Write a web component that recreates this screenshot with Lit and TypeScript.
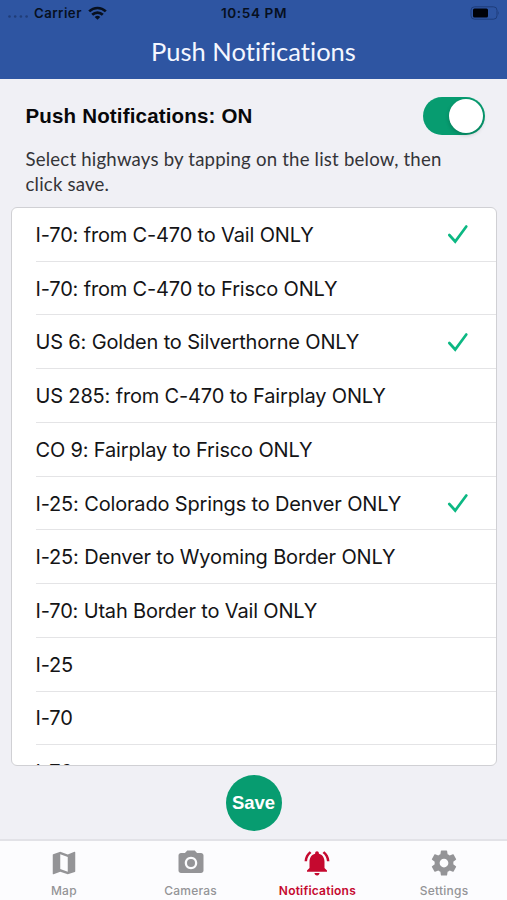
import { LitElement, html, css, svg } from "lit";
import { customElement, state } from "lit/decorators.js";
import { classMap } from "lit/directives/class-map.js";

interface Highway {
  name: string;
  selected?: boolean;
}

const HIGHWAYS: Highway[] = [
  { name: "I-70: from C-470 to Vail ONLY", selected: true },
  { name: "I-70: from C-470 to Frisco ONLY" },
  { name: "US 6: Golden to Silverthorne ONLY", selected: true },
  { name: "US 285: from C-470 to Fairplay ONLY" },
  { name: "CO 9: Fairplay to Frisco ONLY" },
  { name: "I-25: Colorado Springs to Denver ONLY", selected: true },
  { name: "I-25: Denver to Wyoming Border ONLY" },
  { name: "I-70: Utah Border to Vail ONLY" },
  { name: "I-25" },
  { name: "I-70" },
  { name: "I-76" },
];

const TABS = [
  {
    label: "Map",
    icon: svg`<path d="M20.5 3l-.16.03L15 5.1 9 3 3.36 4.9c-.21.07-.36.25-.36.48V20.5c0 .28.22.5.5.5l.16-.03L9 18.9l6 2.1 5.64-1.9c.21-.07.36-.25.36-.48V3.500c0-.28-.22-.5-.5-.5zM15 19l-6-2.110V5l6 2.110V19z"/>`,
  },
  {
    label: "Cameras",
    icon: svg`<circle cx="12" cy="12" r="3.2"/><path d="M9 2L7.170 4H4c-1.100 0-2 .9-2 2v12c0 1.100.9 2 2 2h16c1.100 0 2-.9 2-2V6c0-1.100-.9-2-2-2h-3.170L15 2H9zm3 15c-2.760 0-5-2.240-5-5s2.240-5 5-5 5 2.240 5 5-2.240 5-5 5z"/>`,
  },
  {
    label: "Notifications",
    icon: svg`<path d="M7.580 4.080L6.150 2.650C3.750 4.480 2.170 7.300 2.030 10.500h2c.15-2.650 1.510-4.970 3.550-6.420zm12.390 6.420h2c-.15-3.200-1.730-6.020-4.120-7.850l-1.420 1.430c2.020 1.450 3.390 3.770 3.540 6.420zM18 11c0-3.070-1.640-5.640-4.500-6.320V4c0-.83-.67-1.500-1.500-1.500s-1.500.67-1.500 1.500v.68C7.630 5.360 6 7.920 6 11v5l-2 2v1h16v-1l-2-2v-5zm-6 11c.14 0 .27-.01.4-.04.65-.14 1.180-.58 1.440-1.180.1-.24.15-.5.15-.78h-4c.01 1.100.9 2 2.010 2z"/>`,
  },
  {
    label: "Settings",
    icon: svg`<path d="M19.430 12.980c.04-.32.07-.64.07-.98s-.03-.66-.07-.98l2.110-1.650c.19-.15.24-.42.12-.64l-2-3.460c-.12-.22-.39-.3-.61-.22l-2.490 1c-.52-.4-1.080-.73-1.690-.98l-.38-2.650C14.460 2.180 14.250 2 14 2h-4c-.25 0-.46.18-.49.42l-.38 2.650c-.61.25-1.170.59-1.690.98l-2.490-1c-.23-.09-.49 0-.61.22l-2 3.460c-.13.22-.07.49.12.64l2.110 1.650c-.04.32-.07.65-.07.98s.03.66.07.98l-2.110 1.650c-.19.15-.24.42-.12.64l2 3.460c.12.22.39.3.61.22l2.490-1c.52.4 1.080.73 1.690.98l.38 2.650c.03.24.24.42.49.42h4c.25 0 .46-.18.49-.42l.38-2.650c.61-.25 1.170-.59 1.690-.98l2.490 1c.23.09.49 0 .61-.22l2-3.460c.12-.22.07-.49-.12-.64l-2.110-1.650zM12 15.500c-1.930 0-3.500-1.570-3.500-3.500s1.570-3.500 3.500-3.500 3.500 1.570 3.500 3.500-1.570 3.500-3.500 3.500z"/>`,
  },
];

@customElement("app-root")
export class AppRoot extends LitElement {
  @state() private enabled = true;
  @state() private highways = HIGHWAYS;
  @state() private activeTab = "Notifications";

  static styles = css`
    :host {
      display: flex;
      flex-direction: column;
      width: 507px;
      height: 900px;
      overflow: hidden;
      background: #f0f0f5;
      color: #141416;
      font-family: Inter, "Liberation Sans", sans-serif;
    }
    * {
      box-sizing: border-box;
    }
    header {
      flex: none;
      height: 79px;
      background: #2e55a2;
    }
    .status {
      display: grid;
      grid-template-columns: 1fr auto 1fr;
      align-items: center;
      height: 26px;
      padding: 0 7px 0 8px;
      color: #07101f;
      font-size: 13.200px;
      font-weight: 600;
    }
    .carrier {
      display: flex;
      align-items: center;
    }
    .dots {
      margin-right: 5px;
    }
    .carrier-name {
      letter-spacing: 0.480px;
      margin-right: 6px;
    }
    .time {
      font-size: 13.600px;
      letter-spacing: 0.600px;
    }
    .battery {
      justify-self: end;
    }
    svg {
      display: block;
    }
    h1 {
      margin: 0;
      padding-top: 9px;
      font: 400 25.500px/32px Lato, sans-serif;
      letter-spacing: 0.020px;
      text-align: center;
      color: #f4f7ff;
    }
    .toggle-row {
      display: flex;
      align-items: center;
      justify-content: space-between;
      flex: none;
      height: 39px;
      margin-top: 17.500px;
      padding: 0 22px 0 25.500px;
    }
    h2 {
      margin: 0;
      font: 700 20.500px/24px "Liberation Sans", sans-serif;
      letter-spacing: 0.170px;
      color: #08080a;
    }
    .switch {
      display: flex;
      justify-content: flex-end;
      width: 62.500px;
      height: 38px;
      padding: 2px;
      border: 0;
      border-radius: 19px;
      background: #079c70;
    }
    .switch.off {
      justify-content: flex-start;
      background: #c8c8cc;
    }
    .knob {
      width: 34px;
      height: 34px;
      border-radius: 50%;
      background: #fff;
      box-shadow: 0 2px 4px rgba(0, 0, 0, 0.200);
    }
    .hint {
      flex: none;
      height: 50px;
      margin: 11.500px 50px 0 25.500px;
      font: 400 18.600px/25px Lato, sans-serif;
      letter-spacing: 0.200px;
      color: #343438;
    }
    .list {
      flex: none;
      height: 559px;
      margin: 10px 10px 0 11px;
      padding: 0;
      overflow: hidden;
      border: 1px solid #d0d0d4;
      border-radius: 6px;
      background: #fff;
      list-style: none;
    }
    .row {
      display: flex;
      align-items: center;
      justify-content: space-between;
      height: 53.740px;
      margin-left: 24px;
      padding-right: 27px;
      border-bottom: 1px solid #e4e4e6;
      font-size: 20px;
      letter-spacing: -0.160px;
      white-space: nowrap;
    }
    .row span {
      margin: 1px 0 0 -0.500px;
    }
    .actions {
      display: flex;
      justify-content: center;
      flex: 1;
      padding-top: 9px;
    }
    .save {
      width: 56px;
      height: 56px;
      padding: 0;
      border: 0;
      border-radius: 50%;
      background: #079c70;
      color: #fff;
      font: 700 18.500px/56px "Liberation Sans", sans-serif;
    }
    nav {
      display: grid;
      grid-template-columns: repeat(4, 1fr);
      flex: none;
      height: 61px;
      border-top: 2px solid #e2e2e7;
      background: #fcfcfe;
    }
    .tab {
      display: flex;
      flex-direction: column;
      align-items: center;
      padding: 7px 0 0 1px;
      border: 0;
      background: none;
      color: #949497;
      font: 500 12px/16px Inter, sans-serif;
      letter-spacing: 0.220px;
    }
    .tab svg {
      margin-bottom: 5px;
      fill: currentColor;
    }
    .tab.active {
      color: #c5092f;
      font-weight: 600;
    }
  `;

  private toggle(index: number) {
    this.highways = this.highways.map((h, i) => (i === index ? { ...h, selected: !h.selected } : h));
  }

  render() {
    return html`
      <header>
        <div class="status">
          <div class="carrier">
            <svg class="dots" width="21" height="14" viewBox="0 0 21 14" fill="#203d78">
              <circle cx="1.500" cy="10.500" r="1.300" />
              <circle cx="7.200" cy="10.500" r="1.300" />
              <circle cx="12.900" cy="10.500" r="1.300" />
              <circle cx="18.600" cy="10.500" r="1.300" />
            </svg>
            <span class="carrier-name">Carrier</span>
            <svg width="19" height="14" viewBox="0 0 19 14" fill="none" stroke="#07101f" stroke-width="2.700">
              <path d="M1.200 5.400a11.800 11.800 0 0 1 16.600 0" />
              <path d="M4.200 8.700a7.600 7.600 0 0 1 10.600 0" />
              <path d="M9.500 13.800L6.700 11a4.100 4.100 0 0 1 5.600 0z" fill="#07101f" stroke="none" />
            </svg>
          </div>
          <span class="time">10:54 PM</span>
          <svg class="battery" width="30" height="14" viewBox="0 0 30 14">
            <rect x="1" y=".8" width="26" height="12.400" rx="3.500" fill="none" stroke="#1e3d7b" />
            <rect x="3" y="2.600" width="15" height="9" rx="1.500" fill="#000208" />
            <path d="M28.200 5q1.500 2 0 4z" fill="#1e3d7b" />
          </svg>
        </div>
        <h1>Push Notifications</h1>
      </header>
      <div class="toggle-row">
        <h2>Push Notifications: ${this.enabled ? "ON" : "OFF"}</h2>
        <button
          class=${classMap({ switch: true, off: !this.enabled })}
          aria-label="Push notifications"
          @click=${() => (this.enabled = !this.enabled)}
        >
          <span class="knob"></span>
        </button>
      </div>
      <p class="hint">Select highways by tapping on the list below, then click save.</p>
      <ul class="list">
        ${this.highways.map(
          (h, i) => html`<li class="row" @click=${() => this.toggle(i)}>
            <span>${h.name}</span>
            ${h.selected
              ? html`<svg
                  width="23"
                  height="22"
                  viewBox="0 0 23 22"
                  fill="none"
                  stroke="#0cb883"
                  stroke-width="2.700"
                  stroke-linecap="round"
                >
                  <path d="M3.300 12L9.200 18.500 20.300 3.500" />
                </svg>`
              : ""}
          </li>`
        )}
      </ul>
      <div class="actions"><button class="save">Save</button></div>
      <nav>
        ${TABS.map(
          (t) => html`<button
            class=${classMap({ tab: true, active: t.label === this.activeTab })}
            @click=${() => (this.activeTab = t.label)}
          >
            <svg width="30" height="30" viewBox="0 0 24 24">${t.icon}</svg>
            ${t.label}
          </button>`
        )}
      </nav>
    `;
  }
}
